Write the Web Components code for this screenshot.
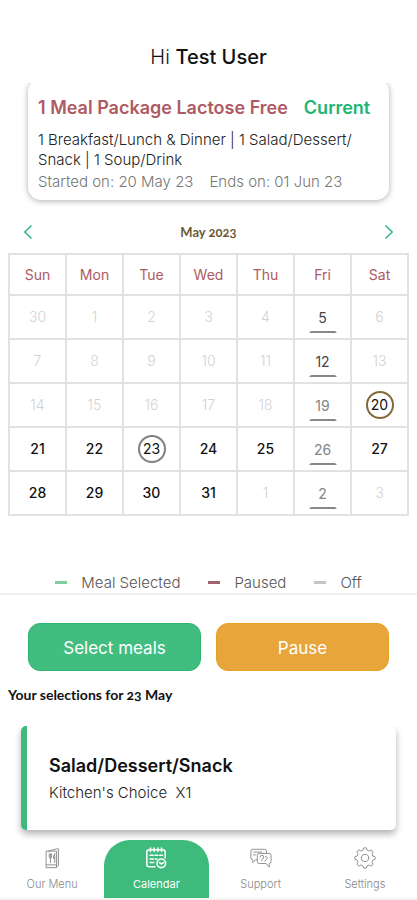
<!DOCTYPE html>
<html lang="en">
<head>
<meta charset="utf-8">
<meta name="viewport" content="width=device-width, initial-scale=1">
<title>Meal calendar</title>
<style>
  html, body { margin: 0; }
  body {
    --green: #3dba7c;
    --rose: #ae5a62;
    --line: #e2e2e2;
    font-family: Inter, Roboto, "Liberation Sans", sans-serif;
    color: #111;
    background: #fff;
  }
</style>
</head>
<body>
<meal-app>
  <user-greeting slot="greeting" name="Test User"></user-greeting>
  <plan-card slot="plan" status="Current" started="20 May 23" ends="01 Jun 23">
    <span slot="name">1 Meal Package Lactose Free</span>
    1 Breakfast/Lunch &amp; Dinner | 1 Salad/Dessert/<wbr>Snack | 1 Soup/Drink
  </plan-card>
  <month-calendar month="May 2023"></month-calendar>
  <status-legend></status-legend>
  <action-row slot="lower">
    <action-button tone="green">Select meals</action-button>
    <action-button tone="amber">Pause</action-button>
  </action-row>
  <section-title slot="lower">Your selections for 23 May</section-title>
  <meal-list slot="lower">
    <meal-card><span slot="title">Salad/Dessert/Snack</span>Kitchen's Choice&nbsp; X1</meal-card>
  </meal-list>
  <tab-bar slot="tabs">
    <tab-item label="Our Menu" icon="menu"></tab-item>
    <tab-item label="Calendar" icon="calendar" active></tab-item>
    <tab-item label="Support" icon="support"></tab-item>
    <tab-item label="Settings" icon="settings"></tab-item>
  </tab-bar>
</meal-app>

<script>
  const define = (tag, render) => customElements.define(tag, class extends HTMLElement {
    connectedCallback() {
      if (this.shadowRoot) return;
      this.attachShadow({ mode: 'open' }).innerHTML =
        '<style>*{box-sizing:border-box}:host{display:block;box-sizing:border-box}</style>' + render(this);
    }
  });

  define('meal-app', () => `
    <style>
      :host { display: flex; flex-direction: column; height: 100vh; min-height: 720px; overflow: hidden; }
      .upper { border-bottom: 2px solid #eee; }
      .lower { flex: 1; min-height: 0; display: flex; flex-direction: column; }
    </style>
    <slot name="greeting"></slot>
    <main class="upper"><slot name="plan"></slot><slot></slot></main>
    <section class="lower"><slot name="lower"></slot></section>
    <slot name="tabs"></slot>`);

  define('user-greeting', el => `
    <style>
      h1 { margin: 0; padding: 43px 16px 12px; font-size: 20px; line-height: 28px; font-weight: 300; text-align: center; }
      b { font-weight: 500; }
    </style>
    <h1>Hi <b>${el.getAttribute('name')}</b></h1>`);

  define('plan-card', el => `
    <style>
      :host { overflow: hidden; padding: 0 28px 10px; }
      article { margin-top: -4px; padding: 17px 10px 8px; border-radius: 13px; box-shadow: 0 1px 6px rgba(0,0,0,.32); }
      header { display: flex; gap: 16px; align-items: baseline; font-size: 18px; line-height: 24px; font-weight: 600; }
      h2 { margin: 0; font: inherit; color: var(--rose); }
      .status { color: #20b573; }
      p { margin: 10px 0 0; font-size: 15px; line-height: 20px; font-weight: 300; color: #222; }
      .dates { display: flex; gap: 16px; margin-top: 2px; color: #777; }
    </style>
    <article>
      <header><h2><slot name="name"></slot></h2><span class="status">${el.getAttribute('status')}</span></header>
      <p><slot></slot></p>
      <p class="dates"><span>Started on: ${el.getAttribute('started')}</span><span>Ends on: ${el.getAttribute('ends')}</span></p>
    </article>`);

  const weeks = [
    [30, 1, 2, 3, 4, 5, 6], [7, 8, 9, 10, 11, 12, 13], [14, 15, 16, 17, 18, 19, 20],
    [21, 22, 23, 24, 25, 26, 27], [28, 29, 30, 31, 1, 2, 3]
  ];
  const dayClass = (day, w, d) => {
    if (d === 5) return w < 2 ? 'off dark' : 'off';
    if (w === 2 && d === 6) return 'ring start';
    if (w === 3 && d === 2) return 'ring';
    return w < 3 || (w === 4 && d > 3) ? 'faded' : '';
  };
  define('month-calendar', el => `
    <style>
      :host { padding: 0 8px; }
      nav { display: flex; justify-content: space-between; align-items: center; height: 43px; padding: 0 8px; }
      nav button { width: 24px; height: 24px; }
      nav svg { display: block; margin: auto; }
      h2 { margin: 0; font: 700 13px/20px Lato, sans-serif; font-variant-numeric: oldstyle-nums; color: #6b5b35; }
      button { border: 0; background: none; font: inherit; color: inherit; padding: 0; cursor: pointer; }
      table { width: 100%; border-collapse: collapse; table-layout: fixed; }
      th, td { border: 2px solid var(--line); padding: 0; text-align: center; height: 44px; font-size: 14px; line-height: 20px; font-weight: 500; }
      th { height: 41px; font-weight: 400; color: var(--rose); }
      td button { display: block; margin: auto; width: 28px; height: 28px; border: 2px solid transparent; line-height: 24px; }
      .faded { color: #d2d2d2; font-weight: 300; }
      .off { color: #858585; font-weight: 400; height: 30px; border-bottom-color: #8a8686; }
      td .off { margin-top: 2px; }
      .dark { color: #444; }
      .ring { border-color: #7e8282; border-radius: 50%; font-weight: 400; }
      .start { border-color: #826a3c; }
    </style>
    <nav>
      <button aria-label="Previous month"><svg width="10" height="16" viewBox="0 0 10 16" fill="none" stroke="#36b98b" stroke-width="1.6"><path d="M8.500 1.500 1.800 8l6.700 6.500"/></svg></button>
      <h2>${el.getAttribute('month')}</h2>
      <button aria-label="Next month"><svg width="10" height="16" viewBox="0 0 10 16" fill="none" stroke="#36b98b" stroke-width="1.6"><path d="M1.500 1.500 8.200 8l-6.700 6.500"/></svg></button>
    </nav>
    <table>
      <thead><tr>${['Sun', 'Mon', 'Tue', 'Wed', 'Thu', 'Fri', 'Sat'].map(n => `<th scope="col">${n}</th>`).join('')}</tr></thead>
      <tbody>${weeks.map((row, w) => `<tr>${row.map((day, d) =>
        `<td><button class="${dayClass(day, w, d)}">${day}</button></td>`).join('')}</tr>`).join('')}</tbody>
    </table>`);

  define('status-legend', () => `
    <style>
      ul { display: flex; justify-content: center; gap: 28px; margin: 0; padding: 57px 0 0; list-style: none; font-size: 15px; line-height: 20px; font-weight: 300; color: #555; }
      li { display: flex; gap: 14px; }
      i { width: 12px; height: 3px; margin-top: 8px; background: var(--c); }
    </style>
    <ul>
      <li style="--c:#7fd0a0"><i></i>Meal Selected</li>
      <li style="--c:#a0636b"><i></i>Paused</li>
      <li style="--c:#c4c4c4"><i></i>Off</li>
    </ul>`);

  define('action-row', () => `
    <style>:host { display: grid; grid-template-columns: 1fr 1fr; gap: 15px; padding: 28px 28px 0; }</style>
    <slot></slot>`);

  define('action-button', el => `
    <style>
      button { width: 100%; height: 48px; padding: 2px 0 0; border: 1px solid #2cb573; border-radius: 12px; background: #42bd80; color: #fff; font: 400 17px/24px Inter, sans-serif; cursor: pointer; }
      :host([tone="amber"]) button { background: #e7a53c; border-color: #e7a01f; }
    </style>
    <button><slot></slot></button>`);

  define('section-title', () => `
    <style>h2 { margin: 0; padding: 14px 8px 0; font: 700 14px/20px Lato, sans-serif; font-variant-numeric: oldstyle-nums; font-variant-ligatures: none; }</style>
    <h2><slot></slot></h2>`);

  define('meal-list', () => `
    <style>:host { flex: 1; min-height: 0; margin-top: 21px; padding: 0 21px; overflow: hidden; }</style>
    <slot></slot>`);

  define('meal-card', () => `
    <style>
      article { padding: 28px 22px 27px; border-left: 6px solid var(--green); border-radius: 5px; box-shadow: 0 4px 7px rgba(0,0,0,.3); }
      h3 { margin: 0; font-size: 18px; line-height: 24px; font-weight: 600; }
      p { margin: 5px 0 0; font-size: 15px; line-height: 20px; font-weight: 300; color: #222; }
    </style>
    <article><h3><slot name="title"></slot></h3><p><slot></slot></p></article>`);

  define('tab-bar', () => `
    <style>
      nav { display: grid; grid-template-columns: repeat(4, 1fr); height: 60px; background: #fff; border-bottom: 2px solid #f4f4f4; }
    </style>
    <nav aria-label="Main"><slot></slot></nav>`);

  // Eight rounded teeth: each is a flat-topped bump joined to the next by a short valley.
  const polar = (r, deg) => {
    const a = deg * Math.PI / 180;
    return (12 + r * Math.cos(a)).toFixed(2) + ' ' + (12 + r * Math.sin(a)).toFixed(2);
  };
  const gear = 'M' + Array.from({ length: 8 }, (_, i) => {
    const a = i * 45;
    return `${polar(9, a - 14)}L${polar(11, a - 8)}Q${polar(11.6, a)} ${polar(11, a + 8)}L${polar(9, a + 14)}Q${polar(8.4, a + 22.5)} ${polar(9, a + 31)}`;
  }).join('L') + 'Z';

  const icons = {
    menu: '<path d="M6 4.500h11v18H6zM6 19.500h11M8 4.500 17 2l2 0v18l-2 2M9 7.500v4q1.300 1.500 2.500 0v-4M10.300 7.500v9.500M15 7.500q-2 2-1.500 5H15v-5M15 12.500v4.500"/>',
    calendar: '<g stroke-width="1.700"><path d="M11 21.500H4.500Q2 21.500 2 19V5.500Q2 3 4.500 3h15Q22 3 22 5.500V12M6 1v4M10 1v4M14 1v4M18 1v4M5.500 9h3.500M11 9h3M16 9h3M5.500 13h3.500M11 13h2M5.500 17h4"/><circle cx="17.800" cy="17.800" r="4.700"/><path d="m15.800 17 2 1.500 2.500-1.500"/></g>',
    support: '<path d="M8 14H6l-3 3v-3Q1 14 1 12V4.500Q1 2.500 3 2.500h13Q18 2.500 18 4.500V7M10 7h11q2 0 2 2v7q0 2-2 2v4l-3.500-4H10q-2 0-2-2V9q0-2 2-2M4 5.500h9M4 8.500h2M11 11q0-2 2-2t2 2-2 2.500v1.500M17 10.500q3 0 1 3l-2 2"/>',
    settings: `<path d="${gear}"/><circle cx="12" cy="12" r="4"/>`
  };
  define('tab-item', el => `
    <style>
      a { display: flex; flex-direction: column; align-items: center; gap: 7px; height: 58px; padding-top: 7px; color: #888; text-decoration: none; font-size: 11px; line-height: 16px; font-weight: 300; }
      :host([active]) a { background: var(--green); color: #fff; border-radius: 26px 26px 0 0; font-weight: 400; }
    </style>
    <a href="#${el.getAttribute('icon')}"${el.hasAttribute('active') ? ' aria-current="page"' : ''}>
      <svg width="22" height="22" viewBox="0 0 24 24" fill="none" stroke="currentColor" stroke-width="1" stroke-linecap="round" stroke-linejoin="round" aria-hidden="true">${icons[el.getAttribute('icon')]}</svg>
      <span>${el.getAttribute('label')}</span>
    </a>`);
</script>
</body>
</html>
